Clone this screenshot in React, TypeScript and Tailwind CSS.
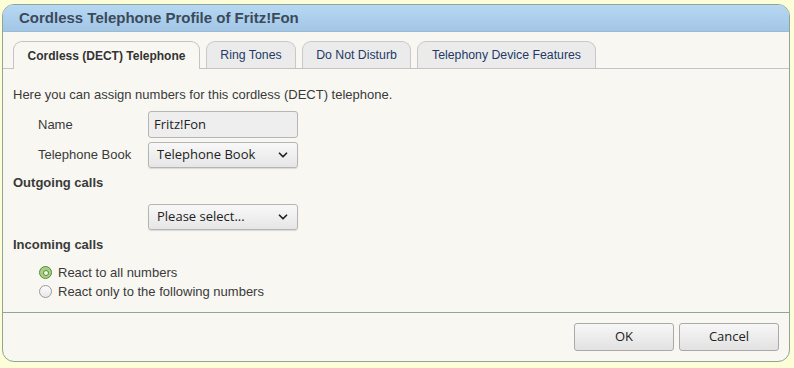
import { ChevronDown } from 'lucide-react';

const tabs = [
  { label: 'Cordless (DECT) Telephone', active: true, w: 'w-[187px]' },
  { label: 'Ring Tones', active: false, w: 'w-[90px]' },
  { label: 'Do Not Disturb', active: false, w: 'w-[109px]' },
  { label: 'Telephony Device Features', active: false, w: 'w-[179px]' },
];

function Select({ value }: { value: string }) {
  return (
    <div className="flex h-[26px] w-[150px] shrink-0 items-center justify-between rounded-[3px] border border-[#b5b5b5] bg-gradient-to-b from-[#f8f8f8] to-[#e6e6e6] pl-[8px] pr-[7px] text-[13px] text-[#222] shadow-[0_1px_1px_rgba(0,0,0,0.12)] [font-family:'Open_Sans',sans-serif]">
      <span>{value}</span>
      <ChevronDown size={14} strokeWidth={3} className="text-[#222]" />
    </div>
  );
}

function Radio({ checked, label }: { checked: boolean; label: string }) {
  return (
    <label className="flex h-[19px] items-center gap-[6px]">
      {checked ? (
        <span className="flex h-[13px] w-[13px] items-center justify-center rounded-full border border-[#5c8a3c] bg-[#a6cf86]">
          <span className="h-[6px] w-[6px] rounded-full border border-[#5c8a3c] bg-[#eef6e6]" />
        </span>
      ) : (
        <span className="h-[13px] w-[13px] rounded-full border border-[#9a9a9a] bg-gradient-to-b from-[#fdfdfd] to-[#e8e8e8]" />
      )}
      <span>{label}</span>
    </label>
  );
}

export default function App() {
  return (
    <div className="h-[368px] w-[794px] bg-[#fdfdd8] pl-[2px] pt-[4px] text-[13px] text-[#3a3a3a] [font-family:'Liberation_Sans',Arial,sans-serif]">
      <div className="flex h-[358px] w-[788px] flex-col overflow-hidden rounded-[12px] border border-[#8fa596] bg-[#f8f7f2]">
        <div className="flex h-[27px] shrink-0 items-center border-b border-[#9bbad4] bg-gradient-to-b from-[#b6d8f3] to-[#a3c6e5] pl-[16px] text-[15px] font-bold text-[#3b4a5c]">
          Cordless Telephone Profile of Fritz!Fon
        </div>

        <div className="flex h-[37px] shrink-0 items-end gap-[6px] border-b border-[#c4c4c4] pl-[10px] pt-[9px]">
          {tabs.map((t) => (
            <div
              key={t.label}
              className={
                t.active
                  ? `${t.w} -mb-px flex h-[28px] shrink-0 items-center justify-center rounded-t-[9px] border border-b-0 border-[#c4c4c4] bg-[#f8f7f2] text-[12px] font-bold text-[#333]`
                  : `${t.w} flex h-[27px] shrink-0 items-center justify-center rounded-t-[9px] border border-b-0 border-[#c8c8c8] bg-[#ebebeb] text-[12.3px] text-[#1f3a66]`
              }
            >
              {t.label}
            </div>
          ))}
        </div>

        <div className="flex flex-1 flex-col pl-[10px] pt-[17px]">
          <p className="leading-[17px]">Here you can assign numbers for this cordless (DECT) telephone.</p>

          <div className="mt-[8px] flex items-center">
            <span className="w-[135px] shrink-0 pl-[25px]">Name</span>
            <div className="flex h-[27px] w-[150px] shrink-0 items-center rounded-[3px] border border-[#b5b5b5] bg-[#eeeeee] pl-[5px] text-[13px] text-[#222] [font-family:'Open_Sans',sans-serif]">
              Fritz!Fon
            </div>
          </div>

          <div className="mt-[4px] flex items-center">
            <span className="w-[135px] shrink-0 pl-[25px]">Telephone Book</span>
            <Select value="Telephone Book" />
          </div>

          <p className="mt-[6px] font-bold leading-[17px]">Outgoing calls</p>

          <div className="mt-[13px] flex items-center pl-[135px]">
            <Select value="Please select..." />
          </div>

          <p className="mt-[6px] font-bold leading-[17px]">Incoming calls</p>

          <div className="mt-[10px] flex flex-col pl-[26px]">
            <Radio checked label="React to all numbers" />
            <Radio checked={false} label="React only to the following numbers" />
          </div>
        </div>

        <div className="flex h-[49px] shrink-0 items-center justify-end gap-[5px] border-t border-[#8fa596] pr-[10px]">
          <button className="h-[28px] w-[100px] rounded-[3px] border border-[#a9a9a9] bg-gradient-to-b from-[#f7f7f7] to-[#e2e2e2] text-[13px] text-[#222] [font-family:'Open_Sans',sans-serif]">
            OK
          </button>
          <button className="h-[28px] w-[100px] rounded-[3px] border border-[#a9a9a9] bg-gradient-to-b from-[#f7f7f7] to-[#e2e2e2] text-[13px] text-[#222] [font-family:'Open_Sans',sans-serif]">
            Cancel
          </button>
        </div>
      </div>
    </div>
  );
}
